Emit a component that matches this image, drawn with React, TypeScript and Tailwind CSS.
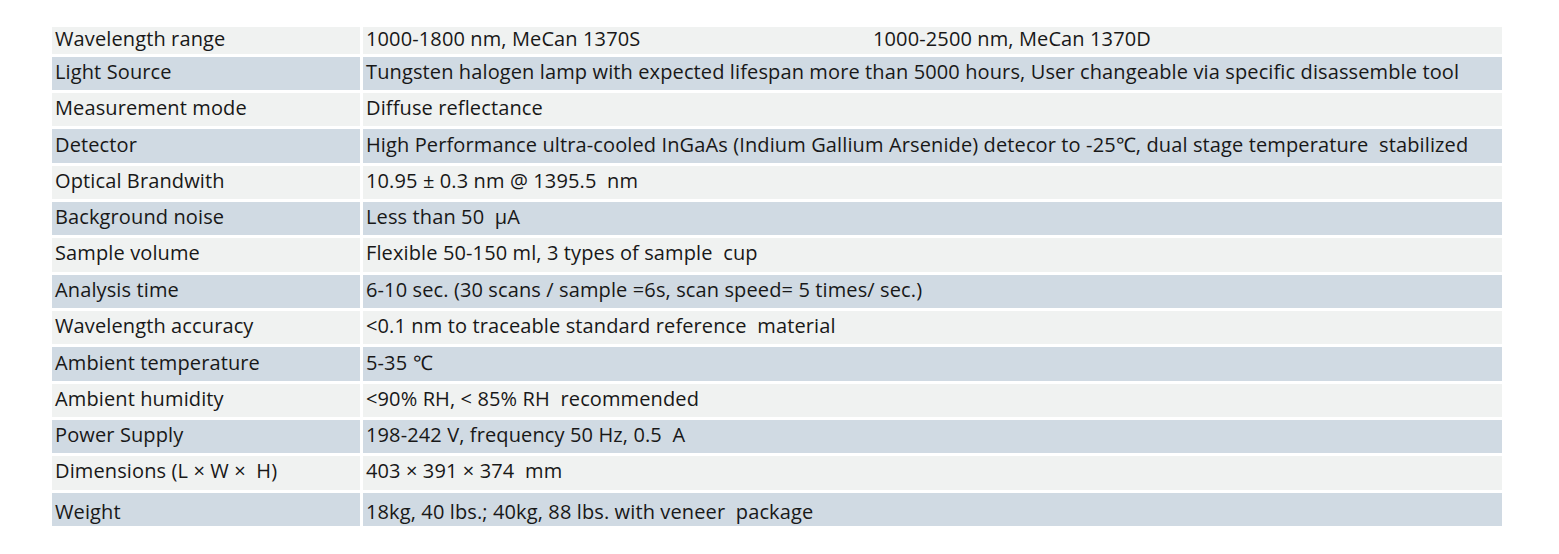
const rows: { label: string; value: React.ReactNode; h: string; pt: string; bg: string }[] = [
  {
    label: 'Wavelength range',
    value: (
      <div className="flex">
        <span className="w-[507px]">1000-1800 nm, MeCan 1370S</span>
        <span>1000-2500 nm, MeCan 1370D</span>
      </div>
    ),
    h: 'h-[27px]',
    pt: 'pt-0',
    bg: 'bg-[#f0f2f1]',
  },
  { label: 'Light Source', value: 'Tungsten halogen lamp with expected lifespan more than 5000 hours, User changeable via specific disassemble tool', h: 'h-[33px]', pt: 'pt-[3px]', bg: 'bg-[#d0dae3]' },
  { label: 'Measurement mode', value: 'Diffuse reflectance', h: 'h-[33px]', pt: 'pt-[3px]', bg: 'bg-[#f0f2f1]' },
  { label: 'Detector', value: 'High Performance ultra-cooled InGaAs (Indium Gallium Arsenide) detecor to -25\u2103, dual stage temperature\u00a0 stabilized', h: 'h-[34px]', pt: 'pt-[4px]', bg: 'bg-[#d0dae3]' },
  { label: 'Optical Brandwith', value: '10.95 \u00b1 0.3 nm @ 1395.5\u00a0 nm', h: 'h-[33px]', pt: 'pt-[3px]', bg: 'bg-[#f0f2f1]' },
  { label: 'Background noise', value: 'Less than 50\u00a0 \u03bcA', h: 'h-[33px]', pt: 'pt-[3px]', bg: 'bg-[#d0dae3]' },
  { label: 'Sample volume', value: 'Flexible 50-150 ml, 3 types of sample\u00a0 cup', h: 'h-[34px]', pt: 'pt-[3px]', bg: 'bg-[#f0f2f1]' },
  { label: 'Analysis time', value: '6-10 sec. (30 scans / sample =6s, scan speed= 5 times/ sec.)', h: 'h-[33px]', pt: 'pt-[3px]', bg: 'bg-[#d0dae3]' },
  { label: 'Wavelength accuracy', value: '<0.1 nm to traceable standard reference\u00a0 material', h: 'h-[33px]', pt: 'pt-[3px]', bg: 'bg-[#f0f2f1]' },
  { label: 'Ambient temperature', value: '5-35 \u2103', h: 'h-[34px]', pt: 'pt-[4px]', bg: 'bg-[#d0dae3]' },
  { label: 'Ambient humidity', value: '<90% RH, < 85% RH\u00a0 recommended', h: 'h-[33px]', pt: 'pt-[3px]', bg: 'bg-[#f0f2f1]' },
  { label: 'Power Supply', value: '198-242 V, frequency 50 Hz, 0.5\u00a0 A', h: 'h-[33px]', pt: 'pt-[3px]', bg: 'bg-[#d0dae3]' },
  { label: 'Dimensions (L \u00d7 W \u00d7\u00a0 H)', value: '403 \u00d7 391 \u00d7 374\u00a0 mm', h: 'h-[34px]', pt: 'pt-[3px]', bg: 'bg-[#f0f2f1]' },
  { label: 'Weight', value: '18kg, 40 lbs.; 40kg, 88 lbs. with veneer\u00a0 package', h: 'h-[33px]', pt: 'pt-[7px]', bg: 'bg-[#d0dae3]' },
];

export default function App() {
  return (
    <div className="w-[1559px] h-[554px] bg-white pt-[27px] pl-[52px] font-['Open_Sans',sans-serif] text-[20px] leading-[24px] tracking-[0.12px] text-[#181818]">
      <div className="grid grid-cols-[308px_1139px] gap-x-[3px] gap-y-[3px]">
        {rows.map((r, i) => (
          <div key={i} className="contents">
            <div className={`${r.h} ${r.pt} ${r.bg} pl-[3px] whitespace-pre`}>{r.label}</div>
            <div className={`${r.h} ${r.pt} ${r.bg} pl-[3px] whitespace-pre`}>{r.value}</div>
          </div>
        ))}
      </div>
    </div>
  );
}
